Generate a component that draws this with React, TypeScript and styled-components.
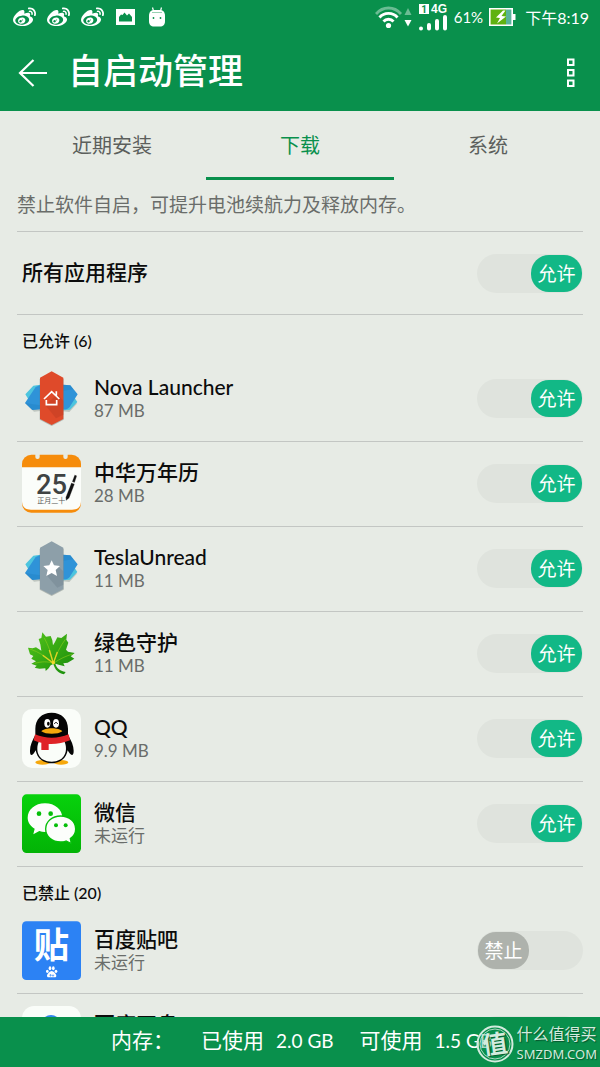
import React, { useState } from "react";
import styled, { createGlobalStyle } from "styled-components";
import { FaWeibo } from "react-icons/fa";

const GlobalStyle = createGlobalStyle`
  * { box-sizing: border-box; }
  body { margin: 0; background: #e7ebe5; }
  button, input { font: inherit; }
`;

const green = "#09904c";
const lineColor = "#c3c6c3";

const Screen = styled.div`
  position: relative;
  display: flex;
  flex-direction: column;
  height: 100vh;
  background: #e7ebe5;
  color: #0c0c0c;
  font-family: Lato, "Noto Sans CJK SC", sans-serif;
  font-size: 21px;
`;

const Header = styled.header`
  flex: none;
  background: ${green};
  color: #fff;
`;

const StatusBar = styled.div`
  display: flex;
  justify-content: space-between;
  align-items: center;
  height: 34px;
  padding: 0 11px 0 13px;
  font-size: 16px;
`;

const Notices = styled.div`
  display: flex;
  align-items: center;
  gap: 11px;
`;

const Indicators = styled.div`
  display: flex;
  align-items: center;
  gap: 6px;
`;

const Percent = styled.span`
  font-size: 15px;
`;

const Clock = styled.time`
  padding-left: 3px;
`;

const TitleBar = styled.div`
  display: flex;
  align-items: center;
  height: 77px;
  padding: 0 14px 0 18px;
`;

const IconButton = styled.button`
  display: flex;
  padding: 0;
  border: 0;
  background: none;
  color: inherit;
`;

const Title = styled.h1`
  flex: 1;
  margin: 0 0 0 20px;
  padding-bottom: 5px;
  font-size: 35px;
  line-height: 48px;
  font-weight: 500;
`;

const Tabs = styled.div`
  flex: none;
  display: grid;
  grid-template-columns: repeat(3, 1fr);
  padding: 0 18px;
`;

const Tab = styled.button<{ $active: boolean }>`
  height: 69px;
  padding: 0;
  border: 0;
  border-bottom: 3px solid ${(p) => (p.$active ? green : "transparent")};
  background: none;
  color: ${(p) => (p.$active ? green : "#5c5f5c")};
  font-size: 20px;
`;

const Body = styled.main`
  flex: 1;
  min-height: 0;
  overflow-y: auto;
  scrollbar-width: none;
  padding: 0 17px;
`;

const Hint = styled.p`
  margin: 0;
  padding: 12px 0 13px;
  border-bottom: 1px solid ${lineColor};
  color: #6a6d6a;
  font-size: 19px;
  line-height: 26px;
  white-space: nowrap;
`;

const AllApps = styled.div`
  display: flex;
  align-items: center;
  justify-content: space-between;
  height: 83px;
  padding-left: 5px;
  border-bottom: 1px solid ${lineColor};
`;

const AllAppsLabel = styled.span`
  padding-bottom: 4px;
  font-weight: 500;
`;

const SectionTitle = styled.h2`
  margin: 0;
  padding: 14px 5px 4px;
  font-size: 16px;
  line-height: 24px;
  font-weight: 500;
`;

const AppList = styled.ul`
  margin: 0;
  padding: 0;
  list-style: none;
`;

const AppRow = styled.li`
  display: flex;
  align-items: center;
  height: 85px;
  padding: 0 0 1px 5px;
  border-bottom: 1px solid ${lineColor};
`;

const AppIcon = styled.svg`
  flex: none;
  width: 59px;
  height: 59px;
`;

const AppText = styled.div`
  flex: 1;
  min-width: 0;
  padding: 0 0 2px 13px;
`;

const AppName = styled.div`
  font-size: 21px;
  line-height: 26px;
  font-weight: 500;
`;

const AppSize = styled.div`
  color: #6a6d6a;
  font-size: 17px;
  line-height: 22px;
`;

const Track = styled.label<{ $on: boolean }>`
  position: relative;
  flex: none;
  display: flex;
  justify-content: ${(p) => (p.$on ? "flex-end" : "flex-start")};
  width: 106px;
  padding: 1px;
  border-radius: 20px;
  background: #dfe3dd;
`;

const Thumb = styled.span<{ $on: boolean }>`
  width: 51px;
  border-radius: 18px;
  background: ${(p) => (p.$on ? "#12b886" : "#aeb2ac")};
  color: #fff;
  font-size: 19px;
  line-height: 37px;
  text-align: center;
`;

const SwitchInput = styled.input`
  position: absolute;
  inset: 0;
  width: 100%;
  height: 100%;
  margin: 0;
  appearance: none;
`;

const MemoryBar = styled.footer`
  position: relative;
  flex: none;
  display: flex;
  align-items: baseline;
  height: 50px;
  padding-left: 111px;
  background: ${green};
  color: #fff;
  font-size: 21px;
  line-height: 46px;
  white-space: nowrap;
`;

const MemoryLabel = styled.span`
  width: 90px;
`;

const MemoryItem = styled.span`
  display: flex;
  align-items: baseline;
  gap: 12px;
  padding-right: 26px;
`;

const MemoryValue = styled.span`
  font-size: 19px;
`;

const Watermark = styled.div`
  position: absolute;
  right: 3px;
  bottom: 3px;
  display: flex;
  align-items: center;
  gap: 3px;
  color: #d3ebde;
  text-shadow: 1px 1px 1px #05552d;
`;

const WatermarkText = styled.div`
  font-size: 16px;
  line-height: 20px;
`;

const WatermarkSite = styled.div`
  font-family: "Noto Sans", sans-serif;
  font-size: 13px;
  line-height: 20px;
`;

function PictureIcon() {
  return (
    <svg width="22" height="16" viewBox="-1 0 22 16">
      <path fill="#fff" fillRule="evenodd" d="M0 0h19v16H0zM3 12.500h13V8l-3-3.500-2 2L8.500 3.500 6.500 6 5 5.500 3 8z" />
    </svg>
  );
}

function RobotIcon() {
  return (
    <svg width="18" height="20" viewBox="0 0 18 20">
      <path d="M4.500 0.500 5.500 4M13.500 0.500 12.500 4" stroke="#fff" strokeWidth="1.200" />
      <path d="M1 9c0-4 2-6 5-6h6c3 0 5 2 5 6v5c0 4-2 5.500-5 5.500H6c-3 0-5-1.500-5-5.500z" fill="#fff" />
      <path d="M4 5.500h10" stroke={green} strokeWidth=".7" opacity=".6" />
      <circle cx="5.500" cy="11" r=".9" fill={green} />
      <circle cx="12.500" cy="11" r=".9" fill={green} />
    </svg>
  );
}

function WifiIcon() {
  return (
    <svg width="38" height="23" viewBox="0 0 38 23">
      <g fill="none" stroke="#fff" strokeWidth="2.800">
        <path d="M1 8C8 0 19 0 26 8" opacity=".4" />
        <path d="M4.500 11.500C9 6 18 6 22.500 11.500" />
        <path d="M8.500 15.500C11 12.500 16 12.500 18.500 15.500" />
      </g>
      <circle cx="13.500" cy="19.500" r="2.600" fill="#fff" />
      <path d="M29.500 9 33 2l3.500 7z" fill="#fff" opacity=".4" />
      <path d="M29.500 14h7L33 20.500z" fill="#fff" />
    </svg>
  );
}

function SignalIcon() {
  return (
    <svg width="29" height="27" viewBox="0 0 29 27">
      <path d="M0 0h10v10H0z" fill="#fff" />
      <text x="5" y="9" textAnchor="middle" fontSize="10" fontWeight="700" fontFamily="Roboto, sans-serif" fill={green}>1</text>
      <text x="12" y="9" fontSize="12" fontWeight="700" fontFamily="Liberation Sans, sans-serif" fill="#fff">4G</text>
      <g stroke="#fff" strokeWidth="4" strokeLinecap="round">
        <path d="M2 24.500v.1M10 21v3.500M18 17v7.500M26 13v11.500" />
      </g>
    </svg>
  );
}

function BatteryIcon() {
  return (
    <svg width="27" height="18" viewBox="0 0 27 18">
      <path d="M1 1h22v16H1z" fill="#5fb211" />
      <path d="M17 1h6v16h-6z" fill="#58b39a" />
      <path d="M.8.800h22.400v16.400H.8z" fill="none" stroke="#fff" strokeWidth="1.600" />
      <path d="M24 6h2.500v6H24z" fill="#fff" />
      <path d="M14 2.500 7 9.500l4 .5-3 5.500 9-7-4.500-.5 4-5.500z" fill="#fff" />
    </svg>
  );
}

function BackIcon() {
  return (
    <svg width="30" height="28" viewBox="0 0 30 28" fill="none" stroke="#fff" strokeWidth="2.200">
      <path d="M15.500 1 2 14l13.500 13M2 14h27" />
    </svg>
  );
}

function MoreIcon() {
  return (
    <svg width="30" height="30" viewBox="0 0 30 30" fill="none" stroke="#fff" strokeWidth="2">
      <path d="M12 1.500h5.500V7H12zM12 12h5.500v5.500H12zM12 22.500h5.500V28H12z" />
    </svg>
  );
}

function WingIcon({ unread }: { unread?: boolean }) {
  return (
    <AppIcon viewBox="0 0 177 177" aria-hidden="true">
      <path fill="#98a29b" opacity=".5" d="m10 103 26 25 19-2v-20zM166 103l-24 26-19-2v-20z" />
      <path fill="#4cc4de" d="m10 76 24-26 21-3v40l-35 5zM123 124l21-2 22-23-12-18-31 10z" />
      <path fill="#2f93d8" d="m9 102 32-48 14-6v73l-24 2zM123 47l22 2 22 27-24 38c-5 6-10 8-20 7z" />
      <path fill="#1f7fc4" opacity=".4" d="m9 102 22 21 24-2v-12zM123 47l22 2 9 12-31 4z" />
      <path d="m89 10 36 20v122l-36 19-36-19V30z" fill="#707a75" opacity=".45" />
      <path d="m89 7 35 19v124l-35 18-35-18V26z" fill={unread ? "#8d9fa9" : "#df4a2a"} />
      <path d={unread ? "m73 108 34-28 17 17v40l-18 9z" : "m70 109 36-34 18 20v42l-22 11z"} fill={unread ? "#788b96" : "#c43f24"} opacity=".6" />
      {unread ? (
        <path fill="#fff" d="m89 64 7 15 18 2-13 12 4 18-16-9-16 9 4-18-13-12 18-2z" />
      ) : (
        <path fill="none" stroke="#fff" strokeWidth="5" d="m66 90 23-22 23 22M73 93v14h31V93M103 67v13" />
      )}
    </AppIcon>
  );
}

function CalendarIcon() {
  return (
    <AppIcon viewBox="66 403 177 177" aria-hidden="true">
      <rect x="66" y="405" width="177" height="174" rx="28" fill="#f68c0b" />
      <path d="M66 443h177v100c0 18-9 27-27 27H93c-18 0-27-9-27-27z" fill="#fbfdfa" />
      <rect x="106" y="396" width="13" height="22" rx="6" fill="#e7ebe5" />
      <rect x="190" y="396" width="13" height="22" rx="6" fill="#e7ebe5" />
      <text x="108" y="524" fontSize="82" fontWeight="500" fontFamily="Roboto, sans-serif" fill="#3f4343">25</text>
      <text x="112" y="551" fontSize="21" fontFamily="Noto Sans CJK SC, sans-serif" fill="#555">正月二十</text>
      <path d="m224 465 7 3-7 21-8-3zM214 489l10 4-16 42-10 8-1-10z" fill="#111" stroke="#fbfdfa" strokeWidth="1" />
    </AppIcon>
  );
}

function LeafIcon() {
  return (
    <AppIcon viewBox="0 0 177 177" aria-hidden="true">
      <defs>
        <linearGradient id="leaf" x1="0" y1="0" x2="1" y2="1">
          <stop offset="0" stopColor="#55c51b" />
          <stop offset="1" stopColor="#168a0b" />
        </linearGradient>
      </defs>
      <path
        fill="url(#leaf)"
        d="M61 25 72 38 86 36 91 49 93 64 99 54 106 40 118 42 135 29 133 47 139 56 132 77 138 83 158 87 146 97 157 104 137 116 124 118 128 127 110 122 100 119C104 132 112 140 131 144L126 151C108 147 99 137 94 120L86 124 80 133 71 141 70 133 52 134 38 131 44 125 28 119 42 112 28 104 34 96 24 91 18 71 32 73 42 70 58 80 55 61 50 45 58 42Z"
      />
      <path
        fill="none"
        stroke="#86c91c"
        strokeWidth="2"
        d="M94 118C88 88 78 62 67 42M94 118C102 92 114 68 130 46M94 118C74 98 50 84 24 75M94 118C114 104 132 96 152 90M94 118C78 112 60 112 38 118"
      />
      <path fill="none" stroke="#e0d324" strokeWidth="4" d="M94 118 82 78M94 118 106 84M94 118 62 94" />
      <circle cx="94" cy="116" r="5" fill="#f1d92c" />
    </AppIcon>
  );
}

function PenguinIcon() {
  return (
    <AppIcon viewBox="66 28 177 177" aria-hidden="true">
      <rect x="66" y="28" width="177" height="177" rx="30" fill="#fafdf9" />
      <ellipse cx="128" cy="188" rx="22" ry="7" fill="#f6a80c" />
      <ellipse cx="183" cy="188" rx="22" ry="7" fill="#f6a80c" />
      <path
        fill="#050505"
        d="M155 39c30 0 49 20 49 48v19c10 17 17 32 17 47 0 9-2 13-5 13-4 0-9-7-13-14-4 24-23 39-48 39s-44-15-48-39c-4 7-8 14-12 14s-5-5-5-13c0-15 7-31 16-47V87c0-28 19-48 49-48z"
      />
      <path fill="#fafdf9" d="M117 124c20 8 56 8 76 0 13 30 1 62-38 62s-51-32-38-62z" />
      <path fill="#df2327" d="M105 104c32 14 69 14 101 0l4 18c-18 8-43 12-64 11v18h-22v-22c-8-1-16-4-23-7z" />
      <ellipse cx="142" cy="71" rx="9" ry="13" fill="#fff" />
      <ellipse cx="168" cy="71" rx="9" ry="13" fill="#fff" />
      <ellipse cx="145" cy="72" rx="4" ry="6" fill="#050505" />
      <path d="M163 73c2-6 8-6 10 0" fill="none" stroke="#050505" strokeWidth="3" />
      <path d="M124 95c10-12 53-12 63 0-12 10-51 10-63 0z" fill="#f6a80c" />
    </AppIcon>
  );
}

function ChatIcon() {
  return (
    <AppIcon viewBox="66 283 177 177" aria-hidden="true">
      <defs>
        <linearGradient id="chat" x1="0" y1="0" x2="0" y2="1">
          <stop offset="0" stopColor="#07d20c" />
          <stop offset="1" stopColor="#03b306" />
        </linearGradient>
      </defs>
      <rect x="66" y="284" width="177" height="176" rx="14" fill="url(#chat)" />
      <path fill="#fcfefb" d="M135 311c30 0 52 19 52 43s-22 43-52 43c-6 0-12-1-17-3l-18 10 4-17c-13-8-21-20-21-33 0-24 22-43 52-43z" />
      <path
        fill="#fcfefb"
        stroke="#05bf09"
        strokeWidth="4"
        d="M182 349c26 0 45 17 45 39 0 12-6 22-16 29l3 15-16-8c-5 2-10 3-16 3-26 0-45-17-45-39s19-39 45-39z"
      />
      <g fill="#05bf09">
        <circle cx="117" cy="342" r="7" />
        <circle cx="152" cy="342" r="7" />
        <circle cx="168" cy="377" r="6" />
        <circle cx="197" cy="377" r="6" />
      </g>
    </AppIcon>
  );
}

function TiebaIcon() {
  return (
    <AppIcon viewBox="66 153 177 177" aria-hidden="true">
      <rect x="66" y="154" width="177" height="176" rx="13" fill="#2c82f4" />
      <text x="154" y="263" textAnchor="middle" fontSize="106" fontWeight="700" fontFamily="Noto Sans CJK SC, sans-serif" fill="#fff">贴</text>
      <g fill="#fff">
        <ellipse cx="142" cy="304" rx="4" ry="5" />
        <ellipse cx="150" cy="295" rx="4" ry="6" />
        <ellipse cx="160" cy="295" rx="4" ry="6" />
        <ellipse cx="168" cy="304" rx="4" ry="5" />
        <path d="M155 303c5 0 14 10 14 14 0 6-7 5-14 5s-14 1-14-5c0-4 9-14 14-14z" />
      </g>
      <path d="M150 314h3v4h-3zM157 314v4h4v-4" fill="none" stroke="#2c82f4" strokeWidth="2" />
    </AppIcon>
  );
}

function DiskIcon() {
  return (
    <AppIcon viewBox="0 0 59 59" aria-hidden="true">
      <rect width="59" height="59" rx="12" fill="#fafdf9" />
      <circle cx="29" cy="19" r="10" fill="#2f86ee" />
      <circle cx="19" cy="34" r="10" fill="#2f86ee" />
      <circle cx="39" cy="34" r="10" fill="#e64b45" />
    </AppIcon>
  );
}

function Switch({ label, initial }: { label: string; initial: boolean }) {
  const [on, setOn] = useState(initial);
  return (
    <Track $on={on}>
      <Thumb $on={on}>{on ? "允许" : "禁止"}</Thumb>
      <SwitchInput type="checkbox" role="switch" aria-label={label} checked={on} onChange={() => setOn(!on)} />
    </Track>
  );
}

type App = { name: string; size: string; icon: React.ReactNode };

const allowed: App[] = [
  { name: "Nova Launcher", size: "87 MB", icon: <WingIcon /> },
  { name: "中华万年历", size: "28 MB", icon: <CalendarIcon /> },
  { name: "TeslaUnread", size: "11 MB", icon: <WingIcon unread /> },
  { name: "绿色守护", size: "11 MB", icon: <LeafIcon /> },
  { name: "QQ", size: "9.9 MB", icon: <PenguinIcon /> },
  { name: "微信", size: "未运行", icon: <ChatIcon /> },
];

const denied: App[] = [
  { name: "百度贴吧", size: "未运行", icon: <TiebaIcon /> },
  { name: "百度网盘", size: "未运行", icon: <DiskIcon /> },
];

function Section({ title, apps, on }: { title: string; apps: App[]; on: boolean }) {
  return (
    <section>
      <SectionTitle>{title}</SectionTitle>
      <AppList>
        {apps.map((app) => (
          <AppRow key={app.name}>
            {app.icon}
            <AppText>
              <AppName>{app.name}</AppName>
              <AppSize>{app.size}</AppSize>
            </AppText>
            <Switch label={app.name} initial={on} />
          </AppRow>
        ))}
      </AppList>
    </section>
  );
}

const tabs = ["近期安装", "下载", "系统"];

export default function App() {
  const [tab, setTab] = useState("下载");
  return (
    <Screen>
      <GlobalStyle />
      <Header>
        <StatusBar>
          <Notices>
            <FaWeibo size={23} />
            <FaWeibo size={23} />
            <FaWeibo size={23} />
            <PictureIcon />
            <RobotIcon />
          </Notices>
          <Indicators>
            <WifiIcon />
            <SignalIcon />
            <Percent>61%</Percent>
            <BatteryIcon />
            <Clock>下午8:19</Clock>
          </Indicators>
        </StatusBar>
        <TitleBar>
          <IconButton aria-label="返回">
            <BackIcon />
          </IconButton>
          <Title>自启动管理</Title>
          <IconButton aria-label="更多">
            <MoreIcon />
          </IconButton>
        </TitleBar>
      </Header>
      <Tabs role="tablist">
        {tabs.map((name) => (
          <Tab key={name} role="tab" aria-selected={tab === name} $active={tab === name} onClick={() => setTab(name)}>
            {name}
          </Tab>
        ))}
      </Tabs>
      <Body>
        <Hint>禁止软件自启，可提升电池续航力及释放内存。</Hint>
        <AllApps>
          <AllAppsLabel>所有应用程序</AllAppsLabel>
          <Switch label="所有应用程序" initial />
        </AllApps>
        <Section title="已允许 (6)" apps={allowed} on />
        <Section title="已禁止 (20)" apps={denied} on={false} />
      </Body>
      <MemoryBar>
        <MemoryLabel>内存：</MemoryLabel>
        <MemoryItem>
          <span>已使用</span>
          <MemoryValue>2.0 GB</MemoryValue>
        </MemoryItem>
        <MemoryItem>
          <span>可使用</span>
          <MemoryValue>1.5 GB</MemoryValue>
        </MemoryItem>
        <Watermark>
          <svg width="38" height="38" viewBox="0 0 38 38" aria-hidden="true">
            <circle cx="19" cy="19" r="17.500" fill={green} fillOpacity=".35" stroke="#d3ebde" strokeWidth="2" />
            <circle cx="19" cy="19" r="15" fill="none" stroke="#d3ebde" strokeWidth=".8" />
            <text x="19" y="28" textAnchor="middle" fontSize="25" fontWeight="700" fontFamily="Noto Sans CJK SC, sans-serif" fill="#d3ebde" transform="rotate(-8 19 19)">值</text>
          </svg>
          <div>
            <WatermarkText>什么值得买</WatermarkText>
            <WatermarkSite>SMZDM.COM</WatermarkSite>
          </div>
        </Watermark>
      </MemoryBar>
    </Screen>
  );
}
